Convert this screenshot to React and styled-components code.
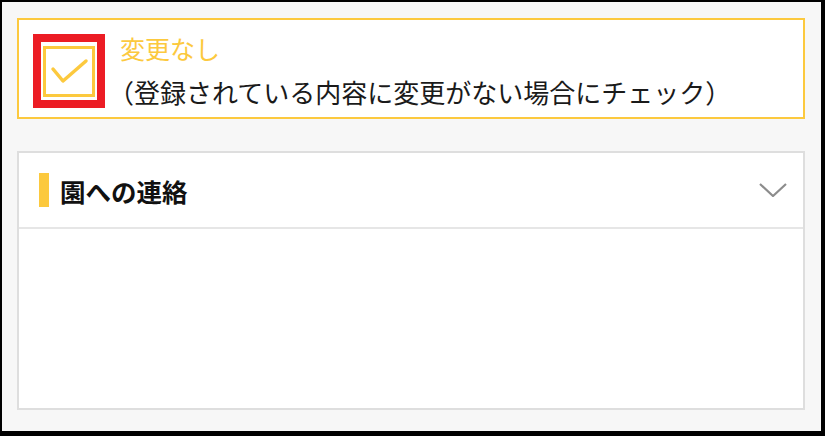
import React from 'react';
import styled, { createGlobalStyle } from 'styled-components';

const GlobalStyle = createGlobalStyle`
  html, body {
    margin: 0;
    padding: 0;
    background: #000;
  }
  body {
    font-family: 'Noto Sans CJK JP', 'Noto Sans', sans-serif;
  }
`;

const YELLOW = '#fcc93e';

const Frame = styled.div`
  box-sizing: border-box;
  width: 825px;
  height: 436px;
  border-style: solid;
  border-color: #000;
  border-width: 2px 4px 5px 2px;
  background: #f7f7f7;
  padding: 16px 16px 0 15px;
  display: flex;
  flex-direction: column;
  gap: 32px;
`;

const NoChangeBox = styled.label`
  display: flex;
  align-items: flex-start;
  gap: 15px;
  background: #fff;
  border: 2px solid ${YELLOW};
  padding: 6px 14px 3px 14px;
  cursor: pointer;
`;

const CheckFrame = styled.div`
  box-sizing: border-box;
  width: 72px;
  height: 74px;
  margin-top: 8px;
  border: 8px solid #ec1c24;
  background: #fff;
  display: flex;
  align-items: center;
  justify-content: center;
  flex-shrink: 0;
`;

const CheckSquare = styled.div`
  box-sizing: border-box;
  width: 52px;
  height: 51px;
  border: 3px solid ${YELLOW};
  display: flex;
  align-items: center;
  justify-content: center;
`;

const LabelText = styled.div`
  display: flex;
  flex-direction: column;
  line-height: 44px;
`;

const LabelTitle = styled.span`
  color: ${YELLOW};
  font-size: 25px;
`;

const LabelNote = styled.span`
  color: #1a1a1a;
  font-size: 26px;
  margin-left: -12px;
  white-space: nowrap;
`;

const Panel = styled.section`
  box-sizing: border-box;
  height: 259px;
  background: #fff;
  border: 2px solid #dedede;
  display: flex;
  flex-direction: column;
`;

const PanelHeader = styled.div`
  height: 74px;
  flex-shrink: 0;
  display: flex;
  align-items: center;
  padding: 0 16px 0 20px;
  border-bottom: 2px solid #e6e6e6;
`;

const Marker = styled.span`
  width: 10px;
  height: 34px;
  background: ${YELLOW};
  margin-right: 11px;
`;

const PanelTitle = styled.h2`
  margin: 0;
  flex: 1;
  font-size: 25.5px;
  font-weight: 700;
  color: #111;
`;

const PanelBody = styled.div`
  flex: 1;
`;

const CheckMark = () => (
  <svg width="40" height="30" viewBox="0 0 40 30">
    <polyline
      points="4,13 14,25 37,5"
      fill="none"
      stroke={YELLOW}
      strokeWidth="3.5"
      strokeLinecap="round"
      strokeLinejoin="round"
    />
  </svg>
);

const Chevron = () => (
  <svg width="28" height="14" viewBox="0 0 28 14">
    <polyline
      points="1,1 14,13 27,1"
      fill="none"
      stroke="#8c8c8c"
      strokeWidth="2.2"
    />
  </svg>
);

const App = () => {
  return (
    <>
      <GlobalStyle />
      <Frame>
        <NoChangeBox>
          <CheckFrame>
            <CheckSquare>
              <CheckMark />
            </CheckSquare>
          </CheckFrame>
          <LabelText>
            <LabelTitle>変更なし</LabelTitle>
            <LabelNote>（登録されている内容に変更がない場合にチェック）</LabelNote>
          </LabelText>
        </NoChangeBox>

        <Panel>
          <PanelHeader>
            <Marker />
            <PanelTitle>園への連絡</PanelTitle>
            <Chevron />
          </PanelHeader>
          <PanelBody />
        </Panel>
      </Frame>
    </>
  );
};

export default App;
